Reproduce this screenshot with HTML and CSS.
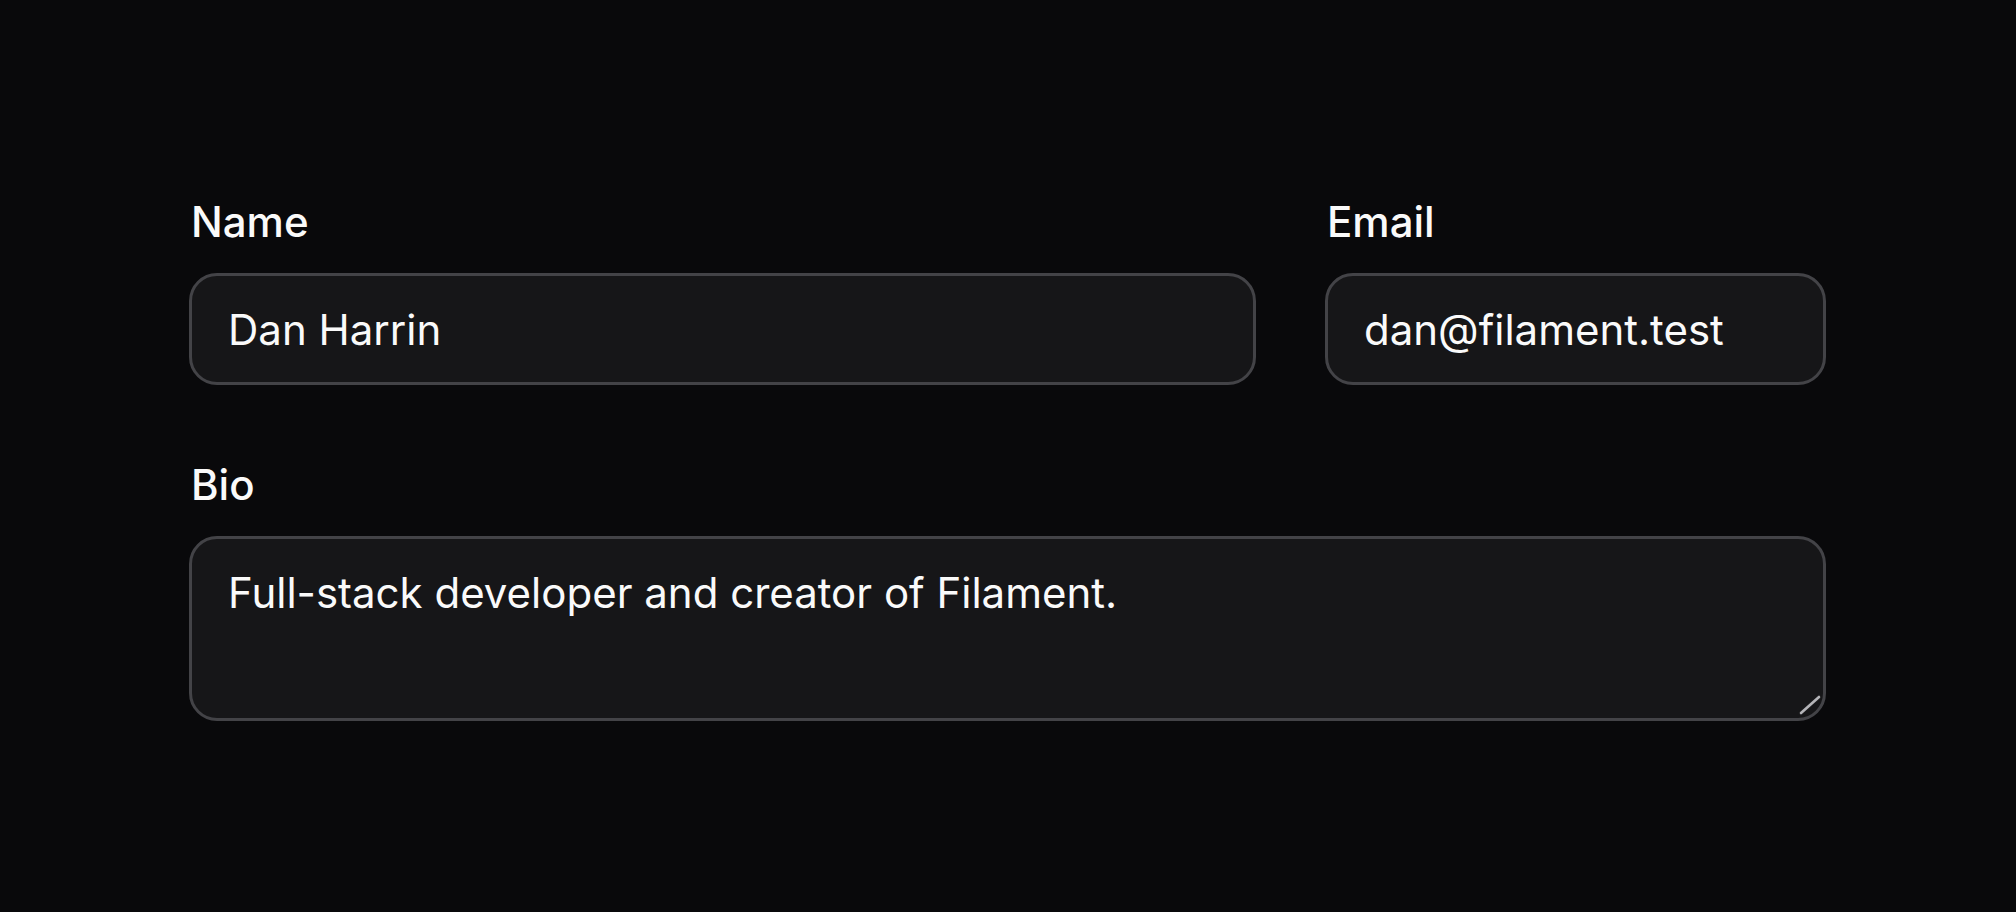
FILE: index.html
```html
<!DOCTYPE html>
<html lang="en">
<head>
<meta charset="utf-8">
<title>Profile form</title>
<link rel="stylesheet" href="styles.css">
</head>
<body>
<form class="form">
  <div class="row row-top">
    <div class="field">
      <label class="label" for="name">Name</label>
      <input class="control" id="name" type="text" value="Dan Harrin">
    </div>
    <div class="field">
      <label class="label" for="email">Email</label>
      <input class="control" id="email" type="email" value="dan@filament.test">
    </div>
  </div>
  <div class="field">
    <label class="label" for="bio">Bio</label>
    <div class="area-wrap">
      <textarea class="control area" id="bio">Full-stack developer and creator of Filament.</textarea>
      <svg class="resizer" width="24" height="22" viewBox="0 0 24 22" aria-hidden="true">
        <line x1="3" y1="19" x2="21" y2="3" stroke="#1a1a1c" stroke-width="5" stroke-linecap="round"/>
        <line x1="3" y1="19" x2="21" y2="3" stroke="#b4b4b8" stroke-width="2.6" stroke-linecap="round"/>
      </svg>
    </div>
  </div>
</form>
</body>
</html>
```

FILE: styles.css
```css
html, body {
  margin: 0;
  background: #09090b;
}

body {
  font-family: Inter, "Noto Sans", sans-serif;
  color: #fafafa;
}

.form {
  width: 1637px;
  padding: 192px 0 0 189px;
  display: flex;
  flex-direction: column;
  gap: 70px;
}

.row-top {
  display: grid;
  grid-template-columns: 1fr 501px;
  column-gap: 69px;
}

.field {
  display: flex;
  flex-direction: column;
  gap: 21px;
}

.label {
  font-size: 42px;
  font-weight: 500;
  line-height: 60px;
  padding-left: 2px;
  color: #fafafa;
}

.control {
  box-sizing: border-box;
  width: 100%;
  height: 112px;
  margin: 0;
  padding: 24px 36px;
  border: 3px solid #434347;
  border-radius: 28px;
  background: #161618;
  color: #fafafa;
  font-family: Inter, "Noto Sans", sans-serif;
  font-size: 42px;
  line-height: 60px;
  outline: none;
}

.area-wrap {
  position: relative;
}

.area {
  display: block;
  height: 185px;
  resize: none;
  overflow: hidden;
}

.resizer {
  position: absolute;
  right: 4px;
  bottom: 5px;
}
```
